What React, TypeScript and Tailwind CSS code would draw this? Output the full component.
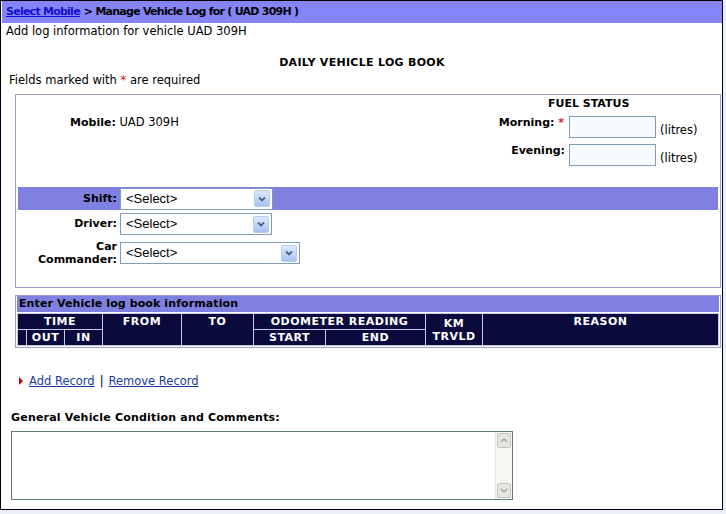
import React from "react";

function FakeSelect({ width }: { width: number }) {
  return (
    <div
      className="flex h-[22px] items-center justify-between border border-[#7f9db9] bg-white pl-[5px] pr-[2px]"
      style={{ width }}
    >
      <span className="font-['Liberation_Sans'] text-[13px] text-black">&lt;Select&gt;</span>
      <span className="flex h-[17px] w-[16px] items-center justify-center rounded-[2px] border border-[#b8cbf0] bg-gradient-to-b from-[#dfe9fd] to-[#a9c1f3]">
        <svg width="8" height="6" viewBox="0 0 8 6">
          <path d="M1 1.5 L4 4.5 L7 1.5" fill="none" stroke="#4d6185" strokeWidth="1.8" />
        </svg>
      </span>
    </div>
  );
}

function App() {
  return (
    <div className="h-[514px] w-[726px] bg-[#eaeffa] font-['DejaVu_Sans',sans-serif] text-[11px] leading-[14px] text-black">
      <div className="flex h-[510px] w-[723px] flex-col border border-black bg-white pl-[1px]">
        {/* breadcrumb */}
        <div className="flex h-[22px] items-center bg-[#8585f9] px-[4px] font-bold tracking-[-0.75px]">
          <a className="text-[#1010d0] underline">Select Mobile</a>
          <span className="ml-[4px]">&gt; Manage Vehicle Log for ( UAD 309H )</span>
        </div>
        <div className="mt-[1px] pl-[4px] text-[11.5px]">Add log information for vehicle UAD 309H</div>

        <div className="mt-[18px] text-center font-bold tracking-[0.3px]">DAILY VEHICLE LOG BOOK</div>
        <div className="mt-[3px] pl-[7px] text-[11.5px]">
          Fields marked with <span className="text-[#d02020]">*</span> are required
        </div>

        {/* details box */}
        <div className="ml-[13px] mr-[1px] mt-[7px] h-[194px] border border-[#9c9cd4] pt-[2px]">
          <div className="flex">
            <div className="mt-[18px] w-[478px] pl-[54px] text-[11.5px]">
              <span className="text-[11px] font-bold">Mobile:</span> UAD 309H
            </div>
            <div className="flex flex-col">
              <div className="pl-[54px] font-bold">FUEL STATUS</div>
              <div className="mt-[5px] flex items-start">
                <div className="w-[75px] pr-[5px] text-right font-bold">
                  Morning: <span className="text-[#d02020]">*</span>
                </div>
                <div className="h-[22px] w-[87px] border border-[#7f9db9] bg-[#f7fbff]" />
                <div className="ml-[4px] mt-[7px] text-[11.5px]">(litres)</div>
              </div>
              <div className="mt-[6px] flex items-start">
                <div className="w-[75px] pr-[4px] text-right font-bold">Evening:</div>
                <div className="h-[22px] w-[87px] border border-[#7f9db9] bg-[#f7fbff]" />
                <div className="ml-[4px] mt-[7px] text-[11.5px]">(litres)</div>
              </div>
            </div>
          </div>

          <div className="mx-[2px] mt-[21px] flex h-[23px] items-center bg-[#8080e0]">
            <div className="w-[102px] pr-[3px] text-right font-bold">Shift:</div>
            <FakeSelect width={153} />
          </div>
          <div className="mx-[2px] mt-[3px] flex items-center">
            <div className="w-[102px] pr-[3px] text-right font-bold">Driver:</div>
            <FakeSelect width={152} />
          </div>
          <div className="mx-[2px] mt-[5px] flex items-center">
            <div className="w-[102px] pr-[3px] text-right font-bold leading-[13px]">
              Car
              <br />
              Commander:
            </div>
            <FakeSelect width={180} />
          </div>
        </div>

        {/* log table */}
        <div className="ml-[13px] mr-[1px] mt-[7px] border border-[#9c9cd4] px-[1px] pb-[1px]">
          <div className="flex h-[16px] items-center bg-[#8080e0] pl-[2px] font-bold tracking-[0.1px]">
            Enter Vehicle log book information
          </div>
          <table className="mt-[1px] w-full border-collapse bg-[#0a0a3c] text-center font-bold tracking-[0.5px] text-white">
            <tbody>
              <tr className="h-[16px]">
                <td colSpan={3} className="border border-[#c8c8e8] pt-[1px] leading-[14px]">TIME</td>
                <td rowSpan={2} className="w-[79px] border border-[#c8c8e8] pt-[1px] align-top leading-[14px]">FROM</td>
                <td rowSpan={2} className="w-[72px] border border-[#c8c8e8] pt-[1px] align-top leading-[14px]">TO</td>
                <td colSpan={2} className="border border-[#c8c8e8] pt-[1px] leading-[14px]">ODOMETER READING</td>
                <td rowSpan={2} className="w-[57px] border border-[#c8c8e8] pt-[1px] leading-[13px]">KM<br />TRVLD</td>
                <td rowSpan={2} className="border border-[#c8c8e8] pt-[1px] align-top leading-[14px]">REASON</td>
              </tr>
              <tr className="h-[16px]">
                <td className="w-[9px] border border-[#c8c8e8]"></td>
                <td className="w-[38px] border border-[#c8c8e8] pt-[1px] leading-[14px]">OUT</td>
                <td className="w-[38px] border border-[#c8c8e8] pt-[1px] leading-[14px]">IN</td>
                <td className="w-[72px] border border-[#c8c8e8] pt-[1px] leading-[14px]">START</td>
                <td className="w-[100px] border border-[#c8c8e8] pt-[1px] leading-[14px]">END</td>
              </tr>
            </tbody>
          </table>
        </div>

        {/* actions */}
        <div className="ml-[17px] mt-[26px] flex items-center text-[11.5px]">
          <svg width="4" height="8" viewBox="0 0 4 8" className="mr-[6px]">
            <path d="M0 0 L4 4 L0 8 Z" fill="#c00000" />
          </svg>
          <a className="text-[#1a3c9a] underline">Add Record</a>
          <span className="mx-[5px]">|</span>
          <a className="text-[#1a3c9a] underline">Remove Record</a>
        </div>

        <div className="ml-[9px] mt-[23px] font-bold tracking-[0.2px]">General Vehicle Condition and Comments:</div>
        <div className="ml-[9px] mt-[6px] flex h-[69px] w-[502px] border border-[#5f7a7a] bg-white">
          <div className="flex-1" />
          <div className="flex w-[17px] flex-col justify-between border-l border-[#e8e8e0] bg-[#f6f6f2] p-[1px]">
            <div className="flex h-[15px] items-center justify-center rounded-[2px] border border-[#c4c4bc] bg-[#e6e6e0]">
              <svg width="8" height="5" viewBox="0 0 8 5">
                <path d="M1 4 L4 1 L7 4" fill="none" stroke="#a0a098" strokeWidth="1.4" />
              </svg>
            </div>
            <div className="flex h-[15px] items-center justify-center rounded-[2px] border border-[#c4c4bc] bg-[#e6e6e0]">
              <svg width="8" height="5" viewBox="0 0 8 5">
                <path d="M1 1 L4 4 L7 1" fill="none" stroke="#a0a098" strokeWidth="1.4" />
              </svg>
            </div>
          </div>
        </div>
      </div>
    </div>
  );
}

export default App;
